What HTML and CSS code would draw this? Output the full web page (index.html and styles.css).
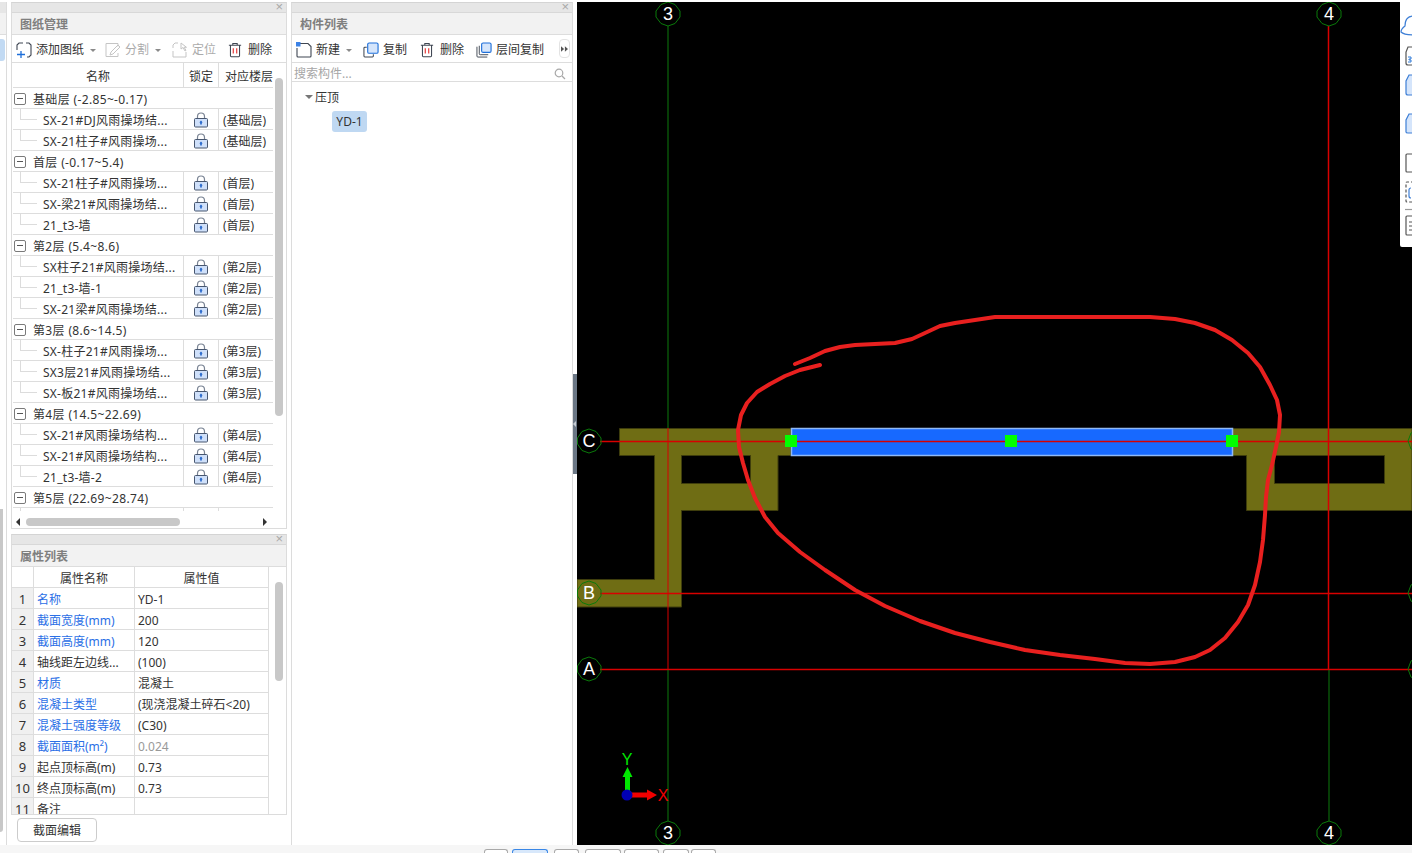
FILE: index.html
```html
<!DOCTYPE html>
<html lang="zh-CN">
<head>
<meta charset="utf-8">
<title>图纸管理</title>
<link rel="stylesheet" href="styles.css">
</head>
<body>
<svg class="defs" width="0" height="0" aria-hidden="true">
  <symbol id="lock" viewBox="0 0 16 16">
    <path d="M4.500 7V4.500a3.500 3.500 0 0 1 7 0V7" fill="none" stroke="#7a8494" stroke-width="1.200"/>
    <rect x="1.500" y="6.500" width="13" height="8.500" rx="1" fill="#cfe0fa" stroke="#47566f"/>
    <path d="M8 8.600l1.700 2H8.800v2H7.200v-2h-.9z" fill="#1f62c9"/>
  </symbol>
  <symbol id="trash" viewBox="0 0 16 18">
    <path d="M1 3.500h14M5.500 3.500V1.500h5v2M2.800 3.500v12.200q0 1 1 1h8.400q1 0 1-1V3.500" fill="none" stroke="#3f4652" stroke-width="1.200"/>
    <path d="M6 7v6M10 7v6" stroke="#e02020" stroke-width="1.200"/>
  </symbol>
  <symbol id="copy" viewBox="0 0 17 17">
    <path d="M4 5.500H2q-1 0-1 1V15q0 1 1 1h8q1 0 1-1v-2" fill="none" stroke="#3f4652" stroke-width="1.100"/>
    <rect x="5" y="1" width="11" height="11" rx="1.500" fill="#d5e5fb" stroke="#1e6fd9" stroke-width="1.200"/>
  </symbol>
</svg>

<div class="app">
  <main class="main">
    <aside class="edge">
      <div class="edge-bar"></div>
      <div class="edge-title"></div>
      <div class="edge-body">
        <div class="edge-chip"></div>
        <div class="edge-scroll"></div>
      </div>
    </aside>

    <section class="left-col">
      <div class="panel tree-panel">
        <div class="panel-bar"><span class="close">×</span></div>
        <div class="panel-title">图纸管理</div>
        <div class="toolbar">
          <span class="tool t-add">
            <svg class="ico" viewBox="0 0 16 16"><path d="M1 8V3l2-2h4M10 1h3l2 2v10l-2 2h-2" fill="none" stroke="#3f4652" stroke-width="1.100"/><path d="M1 12.500h8M5 9v7" stroke="#1e6fd9" stroke-width="1.300" fill="none"/></svg>添加图纸<i class="caret"></i>
          </span>
          <span class="tool off t-split">
            <svg class="ico" viewBox="0 0 16 16"><path d="M1 1.500h12v3M13 11v3.500H1v-13" fill="none" stroke="#c5c5c5"/><path d="M6 10l7-7 2 2-7 7-3 1z" fill="none" stroke="#c5c5c5"/></svg>分割<i class="caret"></i>
          </span>
          <span class="tool off t-loc">
            <svg class="ico" viewBox="0 0 16 16"><path d="M1 9v6h13v-5M1 6V3l2-2h3" fill="none" stroke="#c5c5c5"/><path d="M9 1v6l2-1.500L13 9l1-.7-2-3h2.500z" fill="none" stroke="#c5c5c5"/></svg>定位
          </span>
          <span class="tool">
            <svg class="ico trash"><use href="#trash"/></svg>删除
          </span>
        </div>
        <div class="tree-table">
          <div class="thead">
            <span>名称</span><span>锁定</span><span>对应楼层</span>
          </div>
          <div class="tree-scroll">
            <div class="grp"><i class="box"></i>基础层 (-2.85~-0.17)</div>
            <div class="trow"><span>SX-21#DJ风雨操场结...</span><span><svg class="lock"><use href="#lock"/></svg></span><span>(基础层)</span></div>
            <div class="trow"><span>SX-21柱子#风雨操场...</span><span><svg class="lock"><use href="#lock"/></svg></span><span>(基础层)</span></div>
            <div class="grp"><i class="box"></i>首层 (-0.17~5.4)</div>
            <div class="trow"><span>SX-21柱子#风雨操场...</span><span><svg class="lock"><use href="#lock"/></svg></span><span>(首层)</span></div>
            <div class="trow"><span>SX-梁21#风雨操场结...</span><span><svg class="lock"><use href="#lock"/></svg></span><span>(首层)</span></div>
            <div class="trow"><span>21_t3-墙</span><span><svg class="lock"><use href="#lock"/></svg></span><span>(首层)</span></div>
            <div class="grp"><i class="box"></i>第2层 (5.4~8.6)</div>
            <div class="trow"><span>SX柱子21#风雨操场结...</span><span><svg class="lock"><use href="#lock"/></svg></span><span>(第2层)</span></div>
            <div class="trow"><span>21_t3-墙-1</span><span><svg class="lock"><use href="#lock"/></svg></span><span>(第2层)</span></div>
            <div class="trow"><span>SX-21梁#风雨操场结...</span><span><svg class="lock"><use href="#lock"/></svg></span><span>(第2层)</span></div>
            <div class="grp"><i class="box"></i>第3层 (8.6~14.5)</div>
            <div class="trow"><span>SX-柱子21#风雨操场...</span><span><svg class="lock"><use href="#lock"/></svg></span><span>(第3层)</span></div>
            <div class="trow"><span>SX3层21#风雨操场结...</span><span><svg class="lock"><use href="#lock"/></svg></span><span>(第3层)</span></div>
            <div class="trow"><span>SX-板21#风雨操场结...</span><span><svg class="lock"><use href="#lock"/></svg></span><span>(第3层)</span></div>
            <div class="grp"><i class="box"></i>第4层 (14.5~22.69)</div>
            <div class="trow"><span>SX-21#风雨操场结构...</span><span><svg class="lock"><use href="#lock"/></svg></span><span>(第4层)</span></div>
            <div class="trow"><span>SX-21#风雨操场结构...</span><span><svg class="lock"><use href="#lock"/></svg></span><span>(第4层)</span></div>
            <div class="trow"><span>21_t3-墙-2</span><span><svg class="lock"><use href="#lock"/></svg></span><span>(第4层)</span></div>
            <div class="grp"><i class="box"></i>第5层 (22.69~28.74)</div>
            <div class="trow"><span>SX-屋面柱#风雨操场...</span><span><svg class="lock"><use href="#lock"/></svg></span><span>(第5层)</span></div>
          </div>
          <div class="vbar tree-vbar"></div>
          <div class="hbar">
            <i class="arrow-l"></i><i class="hthumb"></i><i class="arrow-r"></i>
          </div>
        </div>
      </div>

      <div class="panel prop-panel">
        <div class="panel-bar"><span class="close">×</span></div>
        <div class="panel-title">属性列表</div>
        <div class="prop-table">
          <div class="prow phead"><span></span><span>属性名称</span><span>属性值</span></div>
          <div class="prow"><span>1</span><span class="link">名称</span><span>YD-1</span></div>
          <div class="prow"><span>2</span><span class="link">截面宽度(mm)</span><span>200</span></div>
          <div class="prow"><span>3</span><span class="link">截面高度(mm)</span><span>120</span></div>
          <div class="prow"><span>4</span><span>轴线距左边线...</span><span>(100)</span></div>
          <div class="prow"><span>5</span><span class="link">材质</span><span>混凝土</span></div>
          <div class="prow"><span>6</span><span class="link">混凝土类型</span><span>(现浇混凝土碎石&lt;20)</span></div>
          <div class="prow"><span>7</span><span class="link">混凝土强度等级</span><span>(C30)</span></div>
          <div class="prow"><span>8</span><span class="link">截面面积(m²)</span><span class="muted">0.024</span></div>
          <div class="prow"><span>9</span><span>起点顶标高(m)</span><span>0.73</span></div>
          <div class="prow"><span>10</span><span>终点顶标高(m)</span><span>0.73</span></div>
          <div class="prow"><span>11</span><span>备注</span><span></span></div>
          <div class="vbar prop-vbar"></div>
        </div>
      </div>
      <div class="btn-row"><button class="btn">截面编辑</button></div>
    </section>

    <section class="panel mid-panel">
      <div class="panel-bar"><span class="close">×</span></div>
      <div class="panel-title">构件列表</div>
      <div class="toolbar mid-tools">
        <span class="tool">
          <svg class="ico" viewBox="0 0 16 16"><path d="M4 1.500h8l3 3V14q0 1-1 1H2q-1 0-1-1V6" fill="none" stroke="#3f4652" stroke-width="1.100"/><rect x="0" y="0" width="4.500" height="4.500" fill="#3b82e6"/></svg>新建<i class="caret"></i>
        </span>
        <span class="tool"><svg class="ico"><use href="#copy"/></svg>复制</span>
        <span class="tool"><svg class="ico trash"><use href="#trash"/></svg>删除</span>
        <span class="tool">
          <svg class="ico" viewBox="0 0 17 17"><path d="M1 5v10q0 1 1 1h10M3.500 4v8.500q0 1 1 1H13" fill="none" stroke="#3f4652"/><rect x="6" y="1" width="10" height="10" rx="1.500" fill="#d5e5fb" stroke="#1e6fd9" stroke-width="1.200"/></svg>层间复制
        </span>
        <span class="more"><svg class="more-ico" viewBox="0 0 9 7"><path d="M0 0l4 3.500L0 7zM5 0l4 3.500L5 7z" fill="#555"/></svg></span>
      </div>
      <div class="search">
        <span>搜索构件...</span>
        <svg class="search-ico" viewBox="0 0 12 12"><circle cx="5" cy="5" r="3.800" fill="none" stroke="#a8a8a8" stroke-width="1.200"/><path d="M8 8l3 3" stroke="#a8a8a8" stroke-width="1.300"/></svg>
      </div>
      <div class="comp-tree">
        <div class="comp-group"><i class="tri"></i>压顶</div>
        <div class="chip">YD-1</div>
      </div>
    </section>

    <div class="splitter"><i class="grip"></i></div>

    <section class="canvas">
      <svg class="draw" viewBox="577 2 835 843">
        <g fill="#6f6d14" stroke="#3e3d0c" stroke-width="1">
          <path d="M619.500 428.500H791V455.500H778V510.500H681.500V607H577V579.500H654.500V455.500H619.500ZM681.500 455.500V483.500H750.500V455.500Z" fill-rule="evenodd"/>
          <path d="M1232 428.500H1412V510.500H1246.500V455.500H1232ZM1274.500 455.500V483.500H1384.500V455.500Z" fill-rule="evenodd"/>
        </g>
        <rect x="791.500" y="428.500" width="441" height="27" fill="#1769ff" stroke="#8fb8f5" stroke-width="1.500"/>
        <g fill="none">
          <path d="M600 441.500H1412M600 593.500H1412M600 669.500H1412" stroke="#d80000" stroke-width="1.500"/>
          <path d="M668 26V428M668 670V821M1329 670V821" stroke="#0d7a0d" stroke-width="1"/>
          <path d="M668 428V669" stroke="#d80000" stroke-width="1"/>
          <path d="M1328.500 26V669" stroke="#d80000" stroke-width="1.500"/>
        </g>
        <g fill="#00ff00">
          <rect x="785" y="435" width="12" height="12"/>
          <rect x="1005" y="435" width="12" height="12"/>
          <rect x="1226" y="435" width="12" height="12"/>
        </g>
        <polyline class="scribble" points="795,364 810,358 825,351 840,347 855,345 875,344 895,343 912,339 925,333 940,326 955,323 975,320 995,317 1030,317 1070,317 1110,317 1150,317 1175,319 1195,323 1215,330 1232,340 1248,353 1260,367 1270,385 1277,400 1280,415 1279,432 1276,447 1272,465 1268,480 1266,497 1265,515 1263,540 1260,562 1255,585 1248,605 1238,622 1225,638 1210,650 1195,657 1175,662 1150,664 1125,663 1095,659 1060,655 1025,650 990,642 955,633 920,621 885,606 855,590 825,570 800,552 778,533 765,517 755,498 748,480 743,463 739,447 738,430 741,415 747,403 757,392 770,384 785,376 800,370 820,365"/>
        <g class="axis">
          <polygon points="668,2 675,4.500 680,11 680,17 675,23.500 668,26 661,23.500 656,17 656,11 661,4.500"/>
          <polygon points="668,821 675,823.500 680,830 680,836 675,842.500 668,845 661,842.500 656,836 656,830 661,823.500"/>
          <polygon points="1329,2 1336,4.500 1341,11 1341,17 1336,23.500 1329,26 1322,23.500 1317,17 1317,11 1322,4.500"/>
          <polygon points="1329,821 1336,823.500 1341,830 1341,836 1336,842.500 1329,845 1322,842.500 1317,836 1317,830 1322,823.500"/>
          <polygon points="589,429 596,431.500 601,438 601,444 596,450.500 589,453 582,450.500 577.500,444 577.500,438 582,431.500"/>
          <polygon points="589,581 596,583.500 601,590 601,596 596,602.500 589,605 582,602.500 577.500,596 577.500,590 582,583.500"/>
          <polygon points="589,657 596,659.500 601,666 601,672 596,678.500 589,681 582,678.500 577.500,672 577.500,666 582,659.500"/>
          <polygon points="1418,429 1411,433 1408,441 1411,449 1418,453"/>
          <polygon points="1418,581 1411,585 1408,593 1411,601 1418,605"/>
          <polygon points="1418,657 1411,661 1408,669 1411,677 1418,681"/>
        </g>
        <g class="axis-label">
          <text x="668" y="20">3</text>
          <text x="668" y="839">3</text>
          <text x="1329" y="20">4</text>
          <text x="1329" y="839">4</text>
          <text x="589" y="447">C</text>
          <text x="589" y="599">B</text>
          <text x="589" y="675">A</text>
        </g>
        <path d="M625 792V777H622.500L627.500 767L632.500 777H630V792Z" fill="#00e600"/>
        <path d="M630 792.500H647V789.500L657 795L647 800.500V797.500H630Z" fill="#f00000"/>
        <circle cx="627" cy="795" r="5.500" fill="#0000b4"/>
        <text class="coord-y" x="627" y="765">Y</text>
        <text class="coord-x" x="663" y="801">X</text>
      </svg>
      <div class="float-tools">
        <svg class="float-ico" viewBox="0 0 12 245">
          <g fill="none" stroke="#3e7fd6" stroke-width="1.200">
            <path d="M14 14q-9 0-9 10-4 3-4 6 3 3 13 3"/>
            <path d="M14 45H8L6 50v11q0 2 2 2h6" stroke="#555"/>
            <path d="M8 55h3v2H9v1h2v2H8" stroke="#2f7ad8" stroke-width="1"/>
            <path d="M14 73H9L6 79v12q0 2 2 2h6" fill="#d5e5fb"/>
            <path d="M14 112H9L6 118v12q0 1 2 1h6" fill="#d5e5fb"/>
            <path d="M14 152H7q-1 0-1 1v16q0 1 1 1h7" stroke="#555"/>
            <path d="M14 180H7q-1 0-1 1v18q0 1 1 1h7" stroke="#555" stroke-dasharray="3 2"/>
            <path d="M11 186q-2 0-2 2v6q0 2 2 2"/>
            <path d="M5 207.500H14" stroke="#999"/>
            <path d="M14 214H7q-1 0-1 1v17q0 1 1 1h7M9 220h5M9 224h5M9 228h5" stroke="#555"/>
          </g>
        </svg>
      </div>
    </section>
  </main>

  <footer class="status">
    <i class="tab t1"></i><i class="tab t2 on"></i><i class="tab t3"></i><i class="tab t4"></i><i class="tab t5"></i><i class="tab t6"></i><i class="tab t7"></i>
  </footer>
</div>
</body>
</html>
```

FILE: styles.css
```css
* { box-sizing: border-box; }
html, body { margin: 0; padding: 0; height: 100%; }
body {
  background: #fff;
  color: #333;
  font: 12px/1 "Noto Sans", "Noto Sans CJK SC", "Liberation Sans", sans-serif;
  overflow: hidden;
}
.defs { position: absolute; }
.app { width: 1412px; height: 853px; display: flex; flex-direction: column; }
.main { height: 845px; padding-top: 2px; display: flex; background: #fff; }

/* clipped neighbouring panel on the far left */
.edge { width: 7px; display: flex; flex-direction: column; border-right: 1px solid #dcdcdc; }
.edge-bar { height: 11px; background: #e6e6e6; }
.edge-title { height: 22px; background: #f2f2f2; border-bottom: 1px solid #ddd; }
.edge-body { flex: 1; position: relative; }
.edge-chip { width: 5px; height: 22px; margin-top: 4px; background: #c2daf3; border-radius: 0 3px 3px 0; }
.edge-scroll { position: absolute; left: 0; top: 474px; bottom: 13px; width: 3px; background: #c8c8c8; border-radius: 0 0 3px 0; }

.left-col { width: 276px; margin-left: 4px; display: flex; flex-direction: column; }
.panel { border: 1px solid #dcdcdc; border-top-color: #d4d4d4; background: #fff; }
.tree-panel { height: 527px; display: flex; flex-direction: column; }
.prop-panel { height: 281px; margin-top: 5px; display: flex; flex-direction: column; }
.mid-panel { width: 282px; margin-left: 4px; display: flex; flex-direction: column; border-bottom: 0; }

.panel-bar { height: 10px; flex: none; background: #e6e6e6; border-bottom: 1px solid #d8d8d8; position: relative; }
.close { position: absolute; right: 3px; top: -3px; color: #a8a8a8; font: 13px/13px "Liberation Sans", sans-serif; }
.panel-title {
  height: 22px; flex: none; padding: 0 8px;
  background: #f2f2f2; border-bottom: 1px solid #ddd;
  color: #7f7f7f; font-weight: 700; line-height: 23px;
}
.toolbar {
  height: 28px; flex: none; display: flex; align-items: center;
  padding: 3px 0 0 4px; border-bottom: 1px solid #ddd; white-space: nowrap;
}
.tool { display: flex; align-items: center; color: #333; }
.tool.off { color: #ababab; }
.t-add { margin-right: 9px; }
.t-split { margin-right: 11px; }
.t-loc { margin-right: 12px; }
.ico { width: 16px; height: 16px; margin-right: 4px; flex: none; display: block; }
.ico.trash { width: 14px; height: 16px; margin-right: 6px; }
.caret { width: 0; height: 0; margin-left: 6px; border: 3px solid transparent; border-top-color: #8a8a8a; border-bottom: 0; }
.mid-tools { position: relative; }
.mid-tools .tool:nth-child(1) { margin-right: 11px; }
.mid-tools .tool:nth-child(2) { margin-right: 13px; }
.mid-tools .tool:nth-child(3) { margin-right: 12px; }
.more {
  position: absolute; right: 2px; top: 4px; width: 11px; height: 19px;
  border: 1px solid #e3e3e3; border-radius: 4px;
  display: flex; align-items: center; justify-content: center;
}
.more-ico { width: 7px; height: 6px; display: block; }

.tree-table { flex: 1; position: relative; min-height: 0; display: flex; flex-direction: column; }
.thead, .trow { display: grid; grid-template-columns: 170px 35px 55px; }
.thead { height: 25px; grid-template-rows: 24px; line-height: 28px; text-align: center; border-bottom: 1px solid #ddd; flex: none; width: 260px; margin-left: 1px; }
.thead span + span { border-left: 1px solid #ddd; }
.thead span:last-child { white-space: nowrap; overflow: hidden; text-align: left; padding-left: 6px; }
.tree-scroll { flex: 1; min-height: 0; overflow: hidden; width: 260px; margin-left: 1px; }
.grp {
  height: 21px; line-height: 23px; padding-left: 20px; letter-spacing: .35px;
  border-bottom: 1px solid #ddd; position: relative; white-space: nowrap;
}
.box {
  position: absolute; left: 1px; top: 5px; width: 12px; height: 12px;
  border: 1px solid #7a7a7a; border-radius: 2px; background: #fff;
}
.box::after { content: ""; position: absolute; left: 2px; right: 2px; top: 4px; height: 1px; background: #555; }
.trow { height: 21px; grid-template-rows: 20px; line-height: 23px; border-bottom: 1px solid #ddd; position: relative; }
.trow::before { content: ""; position: absolute; left: 7px; width: 17px; top: 10px; border-top: 1px solid #dcdcdc; }
.trow::after { content: ""; position: absolute; left: 7px; top: -1px; height: 11px; border-left: 1px solid #dcdcdc; }
.trow span { white-space: nowrap; overflow: hidden; }
.trow span:first-child { padding-left: 30px; letter-spacing: .25px; }
.trow span:nth-child(2) { border-left: 1px solid #ddd; padding: 2px 1px 0 0; display: flex; justify-content: center; align-items: center; }
.trow span:nth-child(3) { border-left: 1px solid #ddd; padding-left: 4px; }
.lock { width: 16px; height: 16px; display: block; }
.vbar { position: absolute; width: 8px; background: #c8c8c8; border-radius: 4px; }
.tree-vbar { left: 263px; top: 15px; height: 338px; }
.hbar { height: 17px; flex: none; display: flex; align-items: center; position: relative; padding-top: 4px; }
.hthumb { position: absolute; left: 14px; width: 154px; height: 8px; border-radius: 4px; background: #c8c8c8; }
.arrow-l, .arrow-r { position: absolute; width: 0; height: 0; border: 4px solid transparent; }
.arrow-l { left: 4px; border-right-color: #333; border-left: 0; }
.arrow-r { left: 251px; border-left-color: #333; border-right: 0; }

.prop-table { flex: 1; min-height: 0; overflow: hidden; position: relative; }
.prow {
  display: grid; grid-template-columns: 21px 101px 135px; grid-template-rows: 20px; width: 257px;
  height: 21px; line-height: 23px; border-bottom: 1px solid #ddd;
}
.prow span { white-space: nowrap; overflow: hidden; padding-left: 3px; border-left: 1px solid #ddd; }
.prow span:last-child { border-right: 1px solid #ddd; }
.prow span:first-child { background: #f0f0f0; border-left: 0; text-align: center; padding-left: 0; font-size: 13px; }
.phead { text-align: center; }
.phead span { padding-left: 0; }
.phead span:first-child { background: #fff; }
.link { color: #2b6fe6; }
.muted { color: #999; }
.prop-vbar { left: 263px; top: 15px; height: 99px; }

.btn-row { flex: 1; padding: 3px 0 0 6px; }
.btn {
  display: block; width: 80px; height: 24px; padding: 2px 0 0; background: #fff;
  border: 1px solid #ccc; border-radius: 4px; color: #333; font: inherit;
}

.search {
  height: 19px; flex: none; padding: 3px 0 0 2px; display: flex; align-items: center;
  justify-content: space-between; color: #a6a6a6; border-bottom: 1px solid #ddd;
}
.search-ico { width: 12px; height: 12px; margin-right: 6px; }
.comp-tree { padding-top: 5px; position: relative; }
.comp-group { height: 21px; line-height: 22px; padding-left: 23px; position: relative; }
.tri { position: absolute; left: 13px; top: 8px; width: 0; height: 0; border: 4px solid transparent; border-top-color: #777; border-bottom: 0; }
.chip {
  width: 35px; height: 21px; margin: 3px 0 0 40px; background: #bfd8f2;
  border-radius: 3px; text-align: center; line-height: 21px;
}

.splitter { width: 5px; position: relative; margin-left: -1px; }
.grip { position: absolute; left: 1px; top: 372px; width: 4px; height: 100px; background: #6b7785; }
.grip::after { content: ""; position: absolute; left: 0; top: 47px; border: 3px solid transparent; border-right-color: #c6ccd3; border-left: 0; }

.canvas { flex: 1; position: relative; background: #000; overflow: hidden; }
.draw { display: block; width: 835px; height: 843px; }
.scribble { fill: none; stroke: #e8201f; stroke-width: 4; stroke-linejoin: round; stroke-linecap: round; }
.axis polygon { fill: none; stroke: #0a7a0a; stroke-width: 1; }
.axis-label text { fill: #fff; font: 18px "Liberation Sans", sans-serif; text-anchor: middle; }
.coord-y { fill: #00e600; font: 16px "Liberation Sans", sans-serif; text-anchor: middle; }
.coord-x { fill: #f00000; font: 16px "Liberation Sans", sans-serif; text-anchor: middle; }

.float-tools { position: absolute; right: 0; top: 0; width: 12px; height: 245px; background: #fff; border-bottom-left-radius: 2px; }
.float-ico { display: block; width: 12px; height: 245px; }

.status { height: 8px; background: #f6f6f6; display: flex; align-items: flex-end; overflow: hidden; padding-left: 484px; }
.tab { height: 4px; border: 1px solid #a9a9a9; border-bottom: 0; border-radius: 3px 3px 0 0; background: #fff; margin-right: 4px; }
.t1 { width: 24px; }
.t2 { width: 36px; margin-right: 6px; }
.t3 { width: 25px; margin-right: 6px; }
.t4 { width: 36px; margin-right: 3px; }
.t5 { width: 35px; }
.t6 { width: 26px; margin-right: 2px; }
.t7 { width: 25px; }
.on { border-color: #3a87e6; background: #d8e8fb; }
```
